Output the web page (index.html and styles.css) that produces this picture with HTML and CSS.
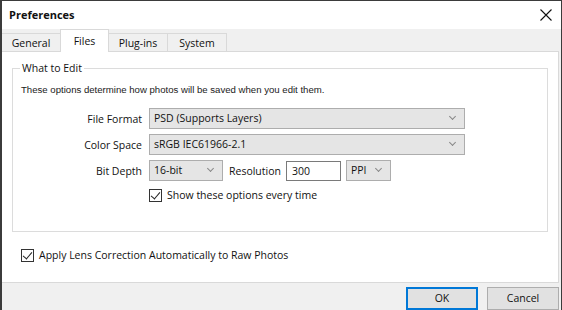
FILE: index.html
```html
<!DOCTYPE html>
<html lang="en">
<head>
  <meta charset="UTF-8">
  <title>Preferences</title>
  <link rel="stylesheet" href="styles.css">
</head>
<body>
  <div class="window">
    <div class="titlebar">
      <span class="title">Preferences</span>
      <svg class="close" width="12" height="12" viewBox="0 0 12 12">
        <path d="M0.5 0.5 L11.5 11.5 M11.5 0.5 L0.5 11.5" stroke="#111" stroke-width="1.1" fill="none"/>
      </svg>
    </div>
    <div class="client">
      <div class="tabs">
        <div class="tab">General</div>
        <div class="tab active">Files</div>
        <div class="tab">Plug-ins</div>
        <div class="tab">System</div>
      </div>
      <div class="panel">
        <fieldset class="group">
          <legend>What to Edit</legend>
          <p class="hint">These options determine how photos will be saved when you edit them.</p>
          <div class="form">
            <label>File Format</label>
            <div class="select wide">PSD (Supports Layers)<span class="chev"></span></div>
            <label>Color Space</label>
            <div class="select wide">sRGB IEC61966-2.1<span class="chev"></span></div>
            <label>Bit Depth</label>
            <div class="row">
              <div class="select depth">16-bit<span class="chev"></span></div>
              <span class="res-label">Resolution</span>
              <div class="input">300</div>
              <div class="select unit">PPI<span class="chev"></span></div>
            </div>
            <span></span>
            <div class="check"><span class="box"></span>Show these options every time</div>
          </div>
        </fieldset>
        <div class="check lens"><span class="box"></span>Apply Lens Correction Automatically to Raw Photos</div>
      </div>
      <div class="buttons">
        <div class="btn default">OK</div>
        <div class="btn">Cancel</div>
      </div>
    </div>
  </div>
</body>
</html>
```

FILE: styles.css
```css
body {
  margin: 0;
  background: #3b3b3b;
  font-family: "Open Sans", "Noto Sans", sans-serif;
  font-size: 10.5px;
  color: #111;
}
.window {
  margin: 1px 1px 0 2px;
  height: 309px;
  background: #f0f0f0;
  display: flex;
  flex-direction: column;
  overflow: hidden;
}
.titlebar {
  height: 29px;
  background: #fff;
  display: flex;
  align-items: center;
  justify-content: space-between;
  padding: 0 8px 0 7px;
}
.title {
  font-weight: bold;
  font-size: 11px;
  margin-top: -1px;
}
.close {
  margin-right: 1px;
}
.client {
  flex: 1;
  display: flex;
  flex-direction: column;
}
.tabs {
  display: flex;
  height: 22px;
  align-items: flex-end;
}
.tab {
  height: 18px;
  line-height: 18px;
  box-sizing: border-box;
  border: 1px solid #d9d9d9;
  border-bottom: none;
  margin-right: -1px;
  background: #f0f0f0;
  text-align: center;
}
.tab:nth-child(1) {
  border-left: none;
  width: 59px;
}
.tab:nth-child(3) {
  width: 60px;
}
.tab:nth-child(4) {
  width: 60px;
}
.tab.active {
  background: #fff;
  height: 23px;
  line-height: 22px;
  margin-bottom: -1px;
  position: relative;
  width: 49px;
}
.panel {
  background: #fff;
  border-top: 1px solid #d9d9d9;
  border-right: 1px solid #d9d9d9;
  border-bottom: 1px solid #d9d9d9;
  margin-right: 2px;
  padding: 8px 10px 0 10px;
  height: 222px;
}
.group {
  margin: 0;
  border: 1px solid #dcdcdc;
  padding: 0 0 0 7px;
  height: 170px;
}
.group legend {
  padding: 0 2px;
  font-size: 10.5px;
  line-height: 16px;
}
.hint {
  font-family: "Liberation Sans", sans-serif;
  font-size: 9.6px;
  margin: 8px 0 0 1px;
  color: #1a1a1a;
}
.form {
  display: grid;
  grid-template-columns: 129px auto;
  column-gap: 7px;
  row-gap: 5px;
  margin: 13px 0 0 -7px;
  align-items: center;
}
.form label {
  text-align: right;
}
.select {
  height: 21px;
  box-sizing: border-box;
  background: #e5e5e5;
  border: 1px solid #adadad;
  padding: 0 0 0 4px;
  line-height: 19px;
  position: relative;
}
.chev {
  position: absolute;
  right: 9px;
  top: 5px;
  width: 4px;
  height: 4px;
  border-right: 1px solid #888;
  border-bottom: 1px solid #888;
  transform: rotate(45deg);
}
.wide {
  width: 316px;
}
.row {
  display: flex;
  align-items: center;
}
.depth {
  width: 74px;
}
.res-label {
  margin: 0 5px 0 6px;
}
.input {
  width: 55px;
  height: 20px;
  box-sizing: border-box;
  border: 1px solid #7a7a7a;
  padding-left: 5px;
  line-height: 18px;
  background: #fff;
}
.unit {
  width: 45px;
  margin-left: 5px;
}
.check {
  display: flex;
  align-items: center;
  margin-top: 2px;
}
.box {
  width: 13px;
  height: 13px;
  box-sizing: border-box;
  border: 1px solid #333;
  margin-right: 5px;
  position: relative;
}
.box::after {
  content: "";
  position: absolute;
  left: 3px;
  top: 0px;
  width: 4px;
  height: 8px;
  border-right: 1px solid #222;
  border-bottom: 1px solid #222;
  transform: rotate(40deg);
}
.lens {
  margin: 16px 0 0 9px;
}
.buttons {
  display: flex;
  justify-content: flex-end;
  gap: 9px;
  padding: 4px 2px 0 0;
}
.btn {
  width: 72px;
  height: 23px;
  box-sizing: border-box;
  background: #e1e1e1;
  border: 1px solid #adadad;
  text-align: center;
  line-height: 21px;
}
.btn.default {
  border: 2px solid #0078d7;
  line-height: 19px;
}
```
